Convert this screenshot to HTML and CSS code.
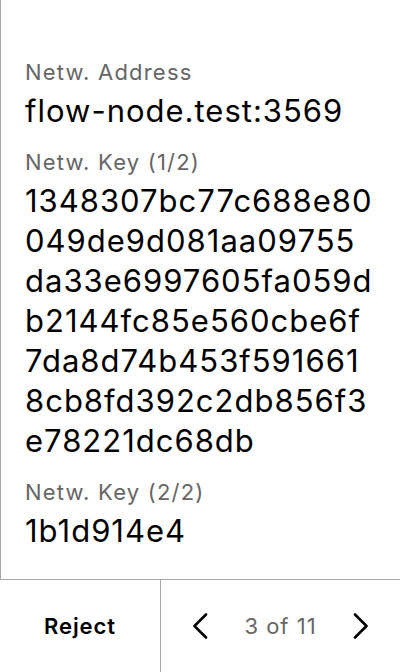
FILE: index.html
```html
<!DOCTYPE html>
<html lang="en">
<head>
<meta charset="utf-8">
<title>Network details</title>
<link rel="stylesheet" href="styles.css">
</head>
<body>
<div class="screen">
  <main class="content">
    <section class="field">
      <div class="label">Netw. Address</div>
      <div class="value">flow-node.test:3569</div>
    </section>
    <section class="field">
      <div class="label">Netw. Key (1/2)</div>
      <div class="value">1348307bc77c688e80<br>049de9d081aa09755<br>da33e6997605fa059d<br>b2144fc85e560cbe6f<br>7da8d74b453f591661<br>8cb8fd392c2db856f3<br>e78221dc68db</div>
    </section>
    <section class="field">
      <div class="label">Netw. Key (2/2)</div>
      <div class="value">1b1d914e4</div>
    </section>
  </main>
  <footer class="footer">
    <button class="reject">Reject</button>
    <nav class="pager">
      <button class="arrow" aria-label="Previous">
        <svg width="16" height="26" viewBox="0 0 16 26"><path d="M14 1.5 L2.5 13 L14 24.5" fill="none" stroke="#000" stroke-width="2.6" stroke-linecap="round" stroke-linejoin="round"/></svg>
      </button>
      <span class="count">3 of 11</span>
      <button class="arrow" aria-label="Next">
        <svg width="16" height="26" viewBox="0 0 16 26"><path d="M2 1.5 L13.5 13 L2 24.5" fill="none" stroke="#000" stroke-width="2.6" stroke-linecap="round" stroke-linejoin="round"/></svg>
      </button>
    </nav>
  </footer>
</div>
</body>
</html>
```
FILE: styles.css
```css
* { box-sizing: border-box; }
html, body {
  margin: 0;
  padding: 0;
  background: #fff;
}
body {
  font-family: Inter, "Noto Sans", sans-serif;
  color: #000;
}
.screen {
  width: 400px;
  height: 672px;
  display: flex;
  flex-direction: column;
}
.content {
  flex: 1;
  border-left: 1px solid #a8a8a8;
  padding: 60px 0 0 24px;
}
.field {
  margin-bottom: 19px;
}
.label {
  font-size: 22px;
  line-height: 24px;
  color: #666;
  letter-spacing: 1.2px;
  margin-bottom: 7px;
}
.value {
  font-size: 31px;
  line-height: 40px;
  letter-spacing: 1px;
  color: #000;
  white-space: nowrap;
}
.footer {
  height: 93px;
  border-top: 1px solid #a8a8a8;
  display: flex;
}
.reject {
  width: 161px;
  border: 0;
  border-right: 1px solid #a8a8a8;
  background: #fff;
  font-family: inherit;
  font-size: 22px;
  font-weight: 600;
  letter-spacing: 0.9px;
  color: #000;
  padding: 0;
}
.pager {
  flex: 1;
  display: flex;
  align-items: center;
  justify-content: space-between;
  padding: 0 31px 0 31px;
}
.arrow {
  border: 0;
  background: none;
  padding: 0;
  width: 16px;
  height: 26px;
  display: flex;
}
.count {
  font-size: 22px;
  letter-spacing: 1px;
  color: #666;
}
```
